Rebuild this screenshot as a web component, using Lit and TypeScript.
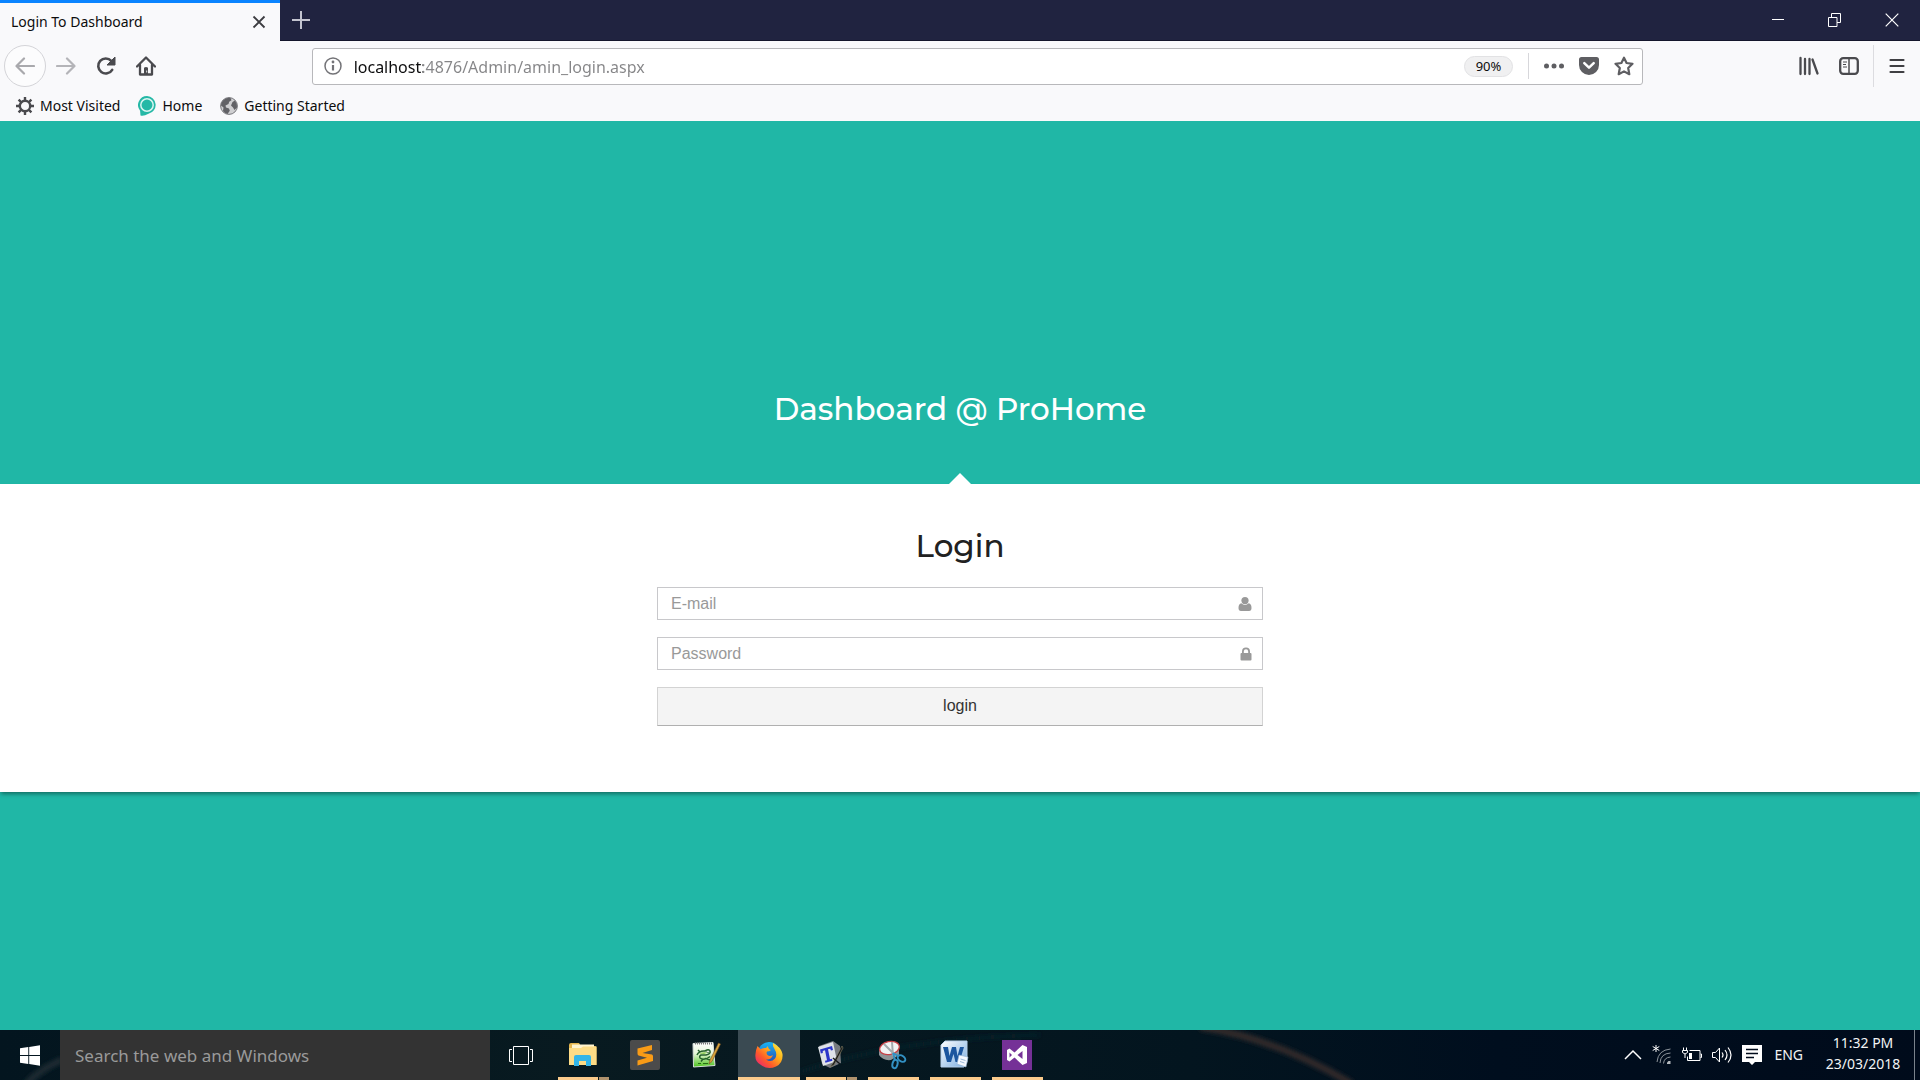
import { LitElement, html, css, svg } from "lit";
import { customElement } from "lit/decorators.js";

const reset = css`
  *, *::before, *::after { box-sizing: border-box; }
  button, input {
    font: inherit;
    color: inherit;
    margin: 0;
    padding: 0;
    border: 0;
    border-radius: 0;
    background: none;
    outline: none;
  }
  button { display: flex; align-items: center; justify-content: center; }
  svg { display: block; flex: none; }
`;

const icon = (w: number, h: number, body: unknown) =>
  html`<svg width=${w} height=${h} viewBox="0 0 ${w} ${h}" fill="none" aria-hidden="true">${body}</svg>`;

/* ---------- Browser chrome ---------- */

@customElement("browser-chrome")
class BrowserChrome extends LitElement {
  static styles = [reset, css`
    :host {
      display: block;
      background: #f9f9fb;
      color: #0c0c0d;
      font: 14px/20px "Noto Sans", "Open Sans", sans-serif;
    }
    .tabs { display: flex; height: 41px; background: #202340; border-bottom: 1px solid #14162c; }
    .tab {
      display: flex;
      align-items: center;
      justify-content: space-between;
      width: 280px;
      height: 41px;
      padding: 0 14px 0 11px;
      background: #f9f9fb;
      border-top: 3px solid #0a84ff;
    }
    .new-tab { width: 42px; }
    .caption { display: flex; margin-left: auto; }
    .caption button { width: 57px; }
    .nav { display: flex; align-items: center; height: 50px; padding: 0 0 0 4px; }
    .back {
      width: 42px;
      height: 42px;
      border: 1px solid #d4d4d8;
      border-radius: 50%;
      background: #fcfcfd;
    }
    .tool { width: 40px; height: 42px; }
    .space { flex: 1; }
    .url {
      display: flex;
      align-items: center;
      flex: 9;
      height: 37px;
      padding: 0 8px 0 11px;
      background: #fff;
      border: 1px solid #b8b8bb;
      border-radius: 3px;
    }
    .address {
      flex: 1;
      min-width: 0;
      height: 35px;
      margin-left: 12px;
      padding-top: 2px;
      font-size: 16px;
      color: transparent;
      background: linear-gradient(to right, #0c0c0d 69px, #858587 69px);
      -webkit-background-clip: text;
      background-clip: text;
    }
    .zoom {
      height: 21px;
      padding: 0 11px;
      border: 1px solid #e2e2e4;
      border-radius: 11px;
      background: #f0f0f1;
      font-size: 13px;
    }
    .rule { width: 1px; height: 26px; margin: 0 15px; background: #d7d7db; }
    .actions { display: flex; gap: 15px; }
    .menu { height: 42px; width: 47px; margin-left: 4px; border-left: 1px solid #dcdce0; }
    .bookmarks { display: flex; gap: 18px; height: 30px; padding: 0 16px; }
    .bookmark { display: flex; align-items: center; gap: 6px; height: 29px; color: inherit; text-decoration: none; }
  `];

  render() {
    return html`
      <div class="tabs">
        <div class="tab">
          <span>Login To Dashboard</span>
          <button aria-label="Close tab">${icon(14, 14, svg`<path d="M1.5 1.5l11 11m0-11l-11 11" stroke="#3c3c40" stroke-width="1.8"/>`)}</button>
        </div>
        <button class="new-tab" aria-label="New tab">${icon(18, 18, svg`<path d="M9 0v18M0 9h18" stroke="#c3c4d0" stroke-width="2"/>`)}</button>
        <div class="caption">
          <button aria-label="Minimize">${icon(12, 12, svg`<path d="M0 5.5h12" stroke="#fff"/>`)}</button>
          <button aria-label="Restore">${icon(13, 14, svg`<path d="M.5 4.500h8.500v9H.5zM3.500 4.500v-4h9v9H9" stroke="#fff"/>`)}</button>
          <button aria-label="Close">${icon(14, 14, svg`<path d="M.7 .7l12.600 12.600m0-12.600L.7 13.300" stroke="#fff" stroke-width="1.200"/>`)}</button>
        </div>
      </div>
      <div class="nav">
        <button class="back" aria-label="Back">${icon(20, 18, svg`<path d="M19 9H2M9 1.500L1.500 9 9 16.500" stroke="#a9a9ad" stroke-width="2.200" stroke-linecap="round" stroke-linejoin="round"/>`)}</button>
        <button class="tool" aria-label="Forward">${icon(20, 18, svg`<path d="M1 9h17M11 1.500L18.500 9 11 16.500" stroke="#b4b4b8" stroke-width="2.200" stroke-linecap="round" stroke-linejoin="round"/>`)}</button>
        <button class="tool" aria-label="Reload">${icon(20, 20, svg`<path d="M16.200 13.800A7.500 7.500 0 1 1 15.300 4.900" stroke="#4a4a4e" stroke-width="2.600" stroke-linecap="round"/><path d="M19 1v8h-8z" fill="#4a4a4e" stroke="#4a4a4e" stroke-linejoin="round"/>`)}</button>
        <button class="tool" aria-label="Home">${icon(20, 20, svg`<path d="M1 10.500L10 1.500l9 9M4 9v9.500h12V9" stroke="#4a4a4e" stroke-width="2.300" stroke-linecap="round" stroke-linejoin="round"/><path d="M8 18.500v-6.700q2-1.600 4 0v6.700z" fill="#4a4a4e"/><path d="M10.700 14.500v2" stroke="#f9f9fb" stroke-width=".9"/>`)}</button>
        <span class="space"></span>
        <div class="url">
          ${icon(18, 18, svg`<circle cx="9" cy="9" r="8" stroke="#737377" stroke-width="1.500"/><path d="M9 8v5.500" stroke="#737377" stroke-width="2.200"/><circle cx="9" cy="5" r="1.400" fill="#737377"/>`)}
          <input class="address" aria-label="Address" value="localhost:4876/Admin/amin_login.aspx" spellcheck="false" />
          <button class="zoom" aria-label="Reset zoom level">90%</button>
          <span class="rule"></span>
          <div class="actions">
            <button aria-label="Page actions">${icon(20, 20, svg`<g fill="#5e5e62"><circle cx="2.500" cy="10" r="2.500"/><circle cx="10" cy="10" r="2.500"/><circle cx="17.500" cy="10" r="2.500"/></g>`)}</button>
            <button aria-label="Save to Pocket">${icon(20, 20, svg`<path d="M2.500 1h15A2.500 2.500 0 0 1 20 3.500V9a10 10 0 0 1-20 0V3.500A2.500 2.500 0 0 1 2.500 1z" fill="#5e5e62"/><path d="M5.300 7.200L10 11.700l4.700-4.500" stroke="#fff" stroke-width="2.500" stroke-linecap="round" stroke-linejoin="round"/>`)}</button>
            <button aria-label="Bookmark this page">${icon(20, 20, svg`<path d="M10 1.700l2.600 5.300 5.900.8-4.300 4.200 1.100 6.200L10 15.400l-5.300 2.800L5.800 12 1.500 7.800l5.900-.8z" stroke="#5e5e62" stroke-width="2.200" stroke-linejoin="round"/>`)}</button>
          </div>
        </div>
        <span class="space"></span>
        <button class="tool" aria-label="Library">${icon(20, 20, svg`<path d="M1.500 2v16M6 3v15M10.500 3v15M13.500 3.500L18.500 17.500" stroke="#4a4a4e" stroke-width="2.300" stroke-linecap="round"/>`)}</button>
        <button class="tool" aria-label="Sidebars">${icon(20, 18, svg`<rect x="1.200" y="1.200" width="17.600" height="15.600" rx="3" stroke="#4a4a4e" stroke-width="2.300"/><path d="M10 1v16" stroke="#4a4a4e" stroke-width="1.500"/><path d="M4 5h4M4 7.500h3M4 10h4" stroke="#4a4a4e"/>`)}</button>
        <button class="menu" aria-label="Open menu">${icon(16, 16, svg`<path d="M1.500 2h13M1.500 8h13M1.500 14h13" stroke="#3f3f43" stroke-width="2.200" stroke-linecap="round"/>`)}</button>
      </div>
      <div class="bookmarks">
        <a class="bookmark" href="#most-visited">${icon(18, 18, svg`<path d="M9 0v18M0 9h18M2.600 2.600l12.800 12.800M15.400 2.600L2.600 15.400" stroke="#4a4a4e" stroke-width="2.400"/><circle cx="9" cy="9" r="5.200" fill="#f9f9fb" stroke="#4a4a4e" stroke-width="2.400"/>`)}Most Visited</a>
        <a class="bookmark" href="#home">${icon(18, 20, svg`<path d="M9 0a9 9 0 0 1 1.500 17.800Q5.500 20.500 2.500 19.500l-.4-4.800A9 9 0 0 1 9 0z" fill="#25b8a6"/><circle cx="9" cy="9" r="6.200" stroke="#d9f5f1" stroke-width="1.500"/>`)}Home</a>
        <a class="bookmark" href="#getting-started">${icon(18, 18, svg`<circle cx="9" cy="9" r="8.400" fill="#cfcfd1" stroke="#77777b"/><path d="M3 3.500Q6 .3 10.500 1l1 2.300-2.300 1.500L8.500 7 5.500 8.500 6 10.500l3 1 .8 2.300L7.500 17Q4.500 16 3 14l.5-3.500L1 8.500Q1 5.500 3 3.500zM12.500 5l2.500-1.500Q17.500 7 17 10.500L14.500 13 13 10.500 11 8.500z" fill="#626266"/>`)}Getting Started</a>
      </div>
    `;
  }
}

/* ---------- Login page ---------- */

@customElement("login-page")
class LoginPage extends LitElement {
  static styles = [reset, css`
    :host {
      display: block;
      flex: 1;
      padding-top: 264px;
      background: #20b7a6;
      color: #212121;
      font: 16px/22px "Liberation Sans", Arial, sans-serif;
    }
    h1, h2 {
      margin: 0;
      font-family: Montserrat, Inter, sans-serif;
      font-size: 31px;
      font-weight: 500;
      line-height: 48px;
      text-align: center;
    }
    h1 { padding-bottom: 51px; color: #fff; }
    .panel {
      padding: 38px 20px 66px;
      background: #fff;
      box-shadow: 0 3px 4px -1px rgba(0, 0, 0, 0.4);
    }
    .panel::before {
      content: "";
      display: block;
      width: 22px;
      height: 11px;
      margin: -49px auto 38px;
      background: #fff;
      clip-path: polygon(50% 0, 100% 100%, 0 100%);
    }
    form { display: flex; flex-direction: column; gap: 17px; max-width: 606px; margin: 0 auto; }
    .field {
      display: flex;
      align-items: center;
      height: 33px;
      padding: 0 10px 0 13px;
      border: 1px solid #c8c8cb;
    }
    .field input { flex: 1; min-width: 0; height: 31px; }
    .field input::placeholder { color: #999; opacity: 1; }
    .submit {
      height: 39px;
      padding-bottom: 1px;
      background: #f4f4f4;
      border: 1px solid #d3d3d3;
      border-bottom-color: #b0b0b0;
      color: #333;
    }
  `];

  render() {
    return html`
      <h1>Dashboard @ ProHome</h1>
      <main class="panel">
        <form @submit=${(e: Event) => e.preventDefault()}>
          <h2>Login</h2>
          <div class="field">
            <input id="email" type="email" placeholder="E-mail" aria-label="E-mail" />
            <label for="email">${icon(14, 14, svg`<g fill="#999"><circle cx="7" cy="3.600" r="3.600"/><path d="M3.300 6.300Q7 9.500 10.700 6.300 13.500 6.800 13.500 11q0 3-2.500 3H3Q.5 14 .5 11q0-4.200 2.800-4.700z"/></g>`)}</label>
          </div>
          <div class="field">
            <input id="password" type="password" placeholder="Password" aria-label="Password" />
            <label for="password">${icon(12, 14, svg`<rect x=".5" y="6" width="11" height="7.500" rx="1" fill="#999"/><path d="M2.900 7V4.500a3.100 3.100 0 0 1 6.200 0V7" stroke="#999" stroke-width="1.800"/>`)}</label>
          </div>
          <button class="submit" type="submit">login</button>
        </form>
      </main>
    `;
  }
}

/* ---------- Desktop taskbar ---------- */

interface TaskApp {
  name: string;
  state: "closed" | "open" | "stacked" | "active";
  art: unknown;
}

const apps: TaskApp[] = [
  {
    name: "File Explorer",
    state: "stacked",
    art: icon(30, 30, svg`
      <path d="M1 5q0-2 2-2h8l2 3h14q1.500 0 1.500 1.500V25H1z" fill="#e5b64e"/>
      <path d="M4 4.500h22V9H4z" fill="#fff4cf"/>
      <path d="M1 8h12l2-1.500h13.500V25H1z" fill="#fddc86"/>
      <path d="M6 26V17q0-2 2-2h13q2 0 2 2v9h-5v-5h-7v5z" fill="#33b5e8"/>`),
  },
  {
    name: "Sublime Text",
    state: "closed",
    art: icon(30, 30, svg`
      <rect width="30" height="30" rx="2" fill="#4b4b4b"/>
      <path d="M7.500 8.500L22 5v5l-9.500 3L22 14.500q1 .5 1 2V21L7.500 25.500v-5L17 17.700l-8.500-2.200q-1-.5-1-2z" fill="#f99b16"/>`),
  },
  {
    name: "Notepad++",
    state: "closed",
    art: icon(30, 30, svg`
      <defs><linearGradient id="np" x2="0" y2="1"><stop stop-color="#fff"/><stop offset=".45" stop-color="#e5f6d8"/><stop offset="1" stop-color="#4cc21c"/></linearGradient></defs>
      <path d="M1 3.500l20-1L23 25.500 1.500 27z" fill="url(#np)" stroke="#d7dfda"/>
      <path d="M3 3.500h17" stroke="#777" stroke-width="2" stroke-dasharray="1 1"/>
      <path d="M5 15q2-4.500 8-4 4-2.500 5 0 1 3-4 4H9q-2 1-1 3 3 2 6 .5l4 1.500M8 12l-2-2M11 19l-2 2.500M15 18.500l3-2" stroke="#24612a" stroke-width="1.500"/>
      <path d="M7 13.500q4-2 9-1l-4 1.500z" fill="#8bcb52"/>
      <circle cx="16" cy="11.500" r="1.300" fill="#fff" stroke="#24612a" stroke-width=".7"/>
      <path d="M26.500 3L18 20l-1 4 3-2.500L28.500 4z" fill="#d9a43c" stroke="#765023" stroke-width=".6"/>
      <path d="M6 23.500h3m2 0h5" stroke="#247015"/>`),
  },
  {
    name: "Firefox",
    state: "active",
    art: icon(30, 30, svg`
      <defs>
        <linearGradient id="fx" x1="1" x2="0" y2="1"><stop stop-color="#fff44f"/><stop offset=".35" stop-color="#ffb31a"/><stop offset=".65" stop-color="#ff5a2a"/><stop offset="1" stop-color="#e31587"/></linearGradient>
        <linearGradient id="globe" x2="0" y2="1"><stop stop-color="#19b5f7"/><stop offset="1" stop-color="#2744ad"/></linearGradient>
      </defs>
      <circle cx="15" cy="13" r="11" fill="url(#globe)"/>
      <path d="M3.500 6l3 3.200Q9 7.500 12 8l2-2q0 3 3 4-2 1.500-4 1.500-1 2 .5 3.500 2.500 2 5.500 0-2 5-7 4.500 5 3.500 9-1 3-4-1-10.500-1.500-2-1-5 8 4 9.500 11 .8 9-6.500 12.500-8 3.800-15-1.500Q.5 22 1.500 14 2 9 3.500 6z" fill="url(#fx)"/>`),
  },
  {
    name: "Text Editor",
    state: "stacked",
    art: icon(30, 30, svg`
      <path d="M3 6L17 1l7 5 1 17-11 5-8-4z" fill="#777b80"/>
      <path d="M2 7L17 2l4 19-14 5z" fill="#dfe3e8"/>
      <path d="M4 9.500L16 6l1 4-2 .5-.8-1.800-2.200.6 2 10 2-.5.400 2-7 2-.4-2 2-.6-2-10-2.200.7v2.100l-2 .5z" fill="#2b36c9"/>
      <path d="M26 6L17 23l-3 4 4-2 9-17z" fill="#15181c" stroke="#8d8463" stroke-width=".6"/>
      <path d="M17 18l7 6" stroke="#15181c" stroke-width="1.500"/>`),
  },
  {
    name: "Snipping Tool",
    state: "open",
    art: icon(30, 30, svg`
      <path d="M1 9v6q4 6 12 5l8-5V8z" fill="#8f9396"/>
      <ellipse cx="11.500" cy="8" rx="10" ry="6.500" fill="#f2f3f4" stroke="#c84046" stroke-width="1.300" transform="rotate(-12 11.500 8)"/>
      <path d="M6 4l12 12M14 2l1 14" stroke="#a3a9ad" stroke-width="2"/>
      <g stroke="#3290c3" stroke-width="2"><ellipse cx="23.500" cy="18.500" rx="4.200" ry="2.800" transform="rotate(35 23.500 18.500)"/><ellipse cx="17" cy="24" rx="2.500" ry="4.200" transform="rotate(15 17 24)"/><path d="M15 13l2 7M15 13l6 3.500"/></g>`),
  },
  {
    name: "Word",
    state: "open",
    art: icon(30, 30, svg`
      <defs><linearGradient id="wd" x2="1" y2="1"><stop stop-color="#fff"/><stop offset="1" stop-color="#79ace0"/></linearGradient></defs>
      <path d="M5 1h22v21l-3 5H1V5z" fill="url(#wd)" stroke="#b6d0eb"/>
      <path d="M3 7h5l1.500 9L12 7h4l1.500 9L20 7h4l-4.500 15h-4L13.500 14 11 22H7z" fill="#1c569f"/>
      <path d="M19 15l9 2-2 10-9-3z" fill="#f5f9ff" stroke="#91aecf" stroke-width=".6"/>
      <path d="M20.500 19l5 1.500M20 21.500l4.500 1.500" stroke="#9db9d9"/>`),
  },
  {
    name: "Visual Studio",
    state: "open",
    art: icon(30, 30, svg`
      <rect width="30" height="30" fill="#753197"/>
      <path fill-rule="evenodd" d="M20.500 5L25 7v16l-4.500 2-8-7.500-5 4L5 20V10l2.500-1.500 5 4zM20.500 11L15.500 15l5 4zM7.500 12.500v5L10 15z" fill="#fff"/>`),
  },
];

@customElement("desktop-taskbar")
class DesktopTaskbar extends LitElement {
  static styles = [reset, css`
    :host {
      position: relative;
      display: flex;
      height: 50px;
      background: linear-gradient(to right, #03151f 0, #081a20 30%, #03151f 62%, #000e1e 78%, #000b1b);
      color: #f2f4f5;
      font: 14px/20px "Noto Sans", "Open Sans", sans-serif;
    }
    .wallpaper { position: absolute; inset: 0; overflow: hidden; }
    .row { position: relative; display: flex; flex: 1; min-width: 0; }
    .start { width: 60px; }
    .search {
      flex: 0 1 430px;
      min-width: 0;
      padding: 1px 15px 0;
      background: #333;
      font-size: 17px;
    }
    .search::placeholder { color: #9a9a9a; opacity: 1; }
    .app { display: grid; grid-template: 50px / 62px; place-items: center; width: 62px; }
    .app > * { grid-area: 1 / 1; }
    .mark { align-self: end; width: 51px; height: 3px; }
    .open .mark, .active .mark { background: #fbcb8c; }
    .stacked .mark { background: linear-gradient(to right, #fbcb8c 40px, #0a1a20 40px, #0a1a20 41px, #b0936e 41px); }
    .active { background: #3a4a52; }
    .active .mark { width: 62px; }
    .tray { display: flex; margin-left: auto; }
    .status { display: flex; align-items: center; gap: 10px; }
    .language { margin: 0 19px 0 12px; }
    .clock { display: block; width: 82px; padding-bottom: 4px; line-height: 21px; }
    .clock span { display: block; }
    .desktop { width: 6px; margin-left: 10px; border-left: 1px solid #7a828b; }
  `];

  render() {
    return html`
      <div class="wallpaper">
        ${icon(1400, 50, svg`
          <defs><filter id="soft"><feGaussianBlur stdDeviation="2"/></filter></defs>
          <g filter="url(#soft)">
            <path d="M1200 -3Q1275 8 1352 54" stroke="#30292a" stroke-width="7"/>
            <path d="M26 54Q42 38 62 30" stroke="#1d2a30" stroke-width="7"/>
            <path d="M800 42Q900 8 1040 5" stroke="#10212a" stroke-width="3"/>
          </g>`)}
      </div>
      <div class="row">
        <button class="start" aria-label="Start">${icon(20, 21, svg`<path d="M0 3.200L8.300 2v8H0zM9.200 1.900L20 .3V10H9.200zM0 11h8.300v8L0 17.800zM9.200 11H20v9.700L9.200 19.100z" fill="#fff"/>`)}</button>
        <input class="search" type="search" aria-label="Search the web and Windows" placeholder="Search the web and Windows" />
        <button class="app" aria-label="Task view">${icon(25, 19, svg`<path d="M4.500 .5h15v18h-15zM3 3.500H.5v12H3M21 3.500h2.500v12H21" stroke="#fff"/>`)}</button>
        ${apps.map((app) => html`
          <button class="app ${app.state}" aria-label=${app.name}>${app.art}<span class="mark"></span></button>
        `)}
        <div class="tray">
          <div class="status">
            <button aria-label="Show hidden icons">${icon(18, 18, svg`<path d="M1 13l8-8 8 8" stroke="#fff" stroke-width="1.500"/>`)}</button>
            <button aria-label="Network">${icon(20, 20, svg`<path d="M4 0v7M.7 1.500l6.600 4M7.300 1.500l-6.600 4" stroke="#fff"/><g stroke="#8d949b"><path d="M5 17Q6 5 18.500 4"/><path d="M8 18Q8.500 8.500 18.500 8"/><path d="M11.500 18.500Q12 12.500 18.500 12"/></g><path d="M15 19v-1.500l1.500-1.500h2v3z" fill="#b5babf"/>`)}</button>
            <button aria-label="Battery">${icon(20, 18, svg`<path d="M7.500 4.500h10.500v10H5.500v-4M18.500 8h1v3.500h-1" stroke="#fff"/><path d="M1.500 1.500v2.500M4.500 1.500v2.500M.5 4.500h5v2q-2.500 3-5 0zM3 8v4" stroke="#fff"/><path d="M7 7h3v6H7z" fill="#fff"/>`)}</button>
            <button aria-label="Volume">${icon(20, 18, svg`<path d="M.5 6.500h3L7.500 2v14l-4-4.500h-3z" stroke="#fff"/><path d="M10 6.500q2 2.500 0 5M13 4q4 5 0 10M16 1.500q6 7.500 0 15" stroke="#fff" stroke-width="1.200"/>`)}</button>
            <button aria-label="Notifications">${icon(20, 20, svg`<path d="M0 0h20v17h-7l-3 3-3-3H0z" fill="#fff"/><path d="M4 4.500h12M4 8.500h12M4 12.500h8" stroke="#000b1b" stroke-width="1.300"/>`)}</button>
          </div>
          <button class="language" aria-label="Input language">ENG</button>
          <button class="clock"><span>11:32 PM</span><span>23/03/2018</span></button>
          <button class="desktop" aria-label="Show desktop"></button>
        </div>
      </div>
    `;
  }
}

@customElement("app-root")
class AppRoot extends LitElement {
  static styles = css`
    :host { display: flex; flex-direction: column; min-height: 100vh; }
  `;

  render() {
    return html`
      <browser-chrome></browser-chrome>
      <login-page></login-page>
      <desktop-taskbar></desktop-taskbar>
    `;
  }
}
